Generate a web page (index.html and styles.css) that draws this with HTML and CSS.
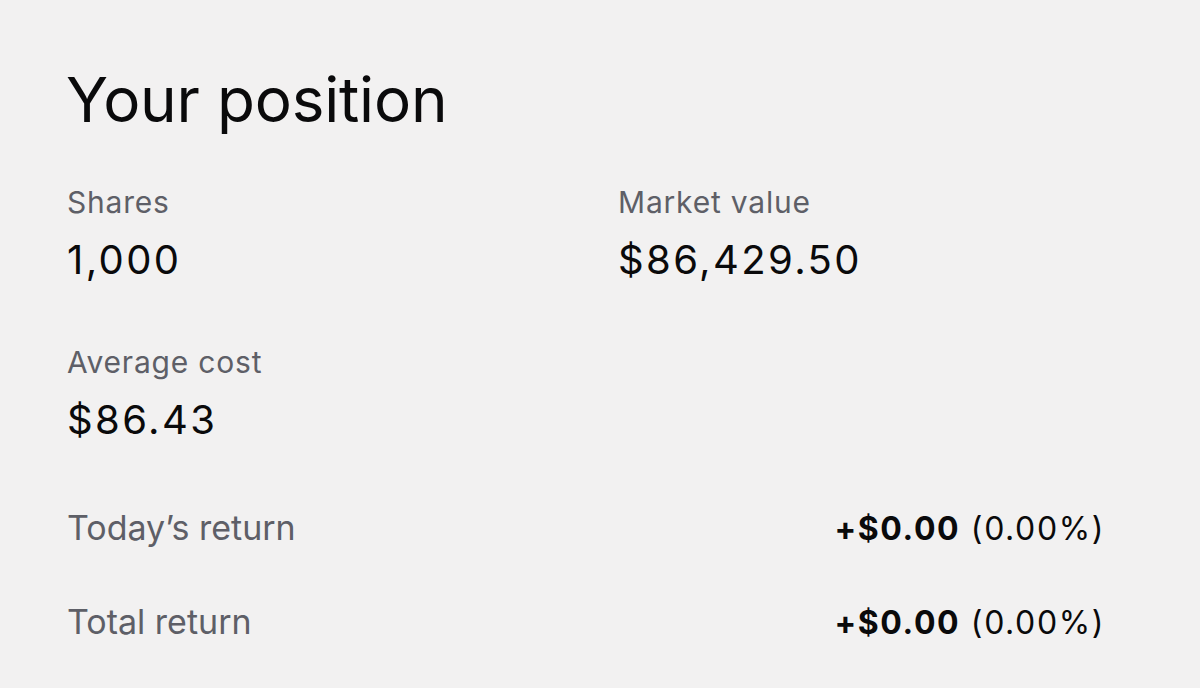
FILE: index.html
```html
<!DOCTYPE html>
<html lang="en">
<head>
<meta charset="utf-8">
<title>Your position</title>
<link rel="stylesheet" href="styles.css">
</head>
<body>
<main class="position">
  <h1 class="title">Your position</h1>
  <div class="stats">
    <div class="stat">
      <div class="label">Shares</div>
      <div class="value">1,000</div>
    </div>
    <div class="stat">
      <div class="label">Market value</div>
      <div class="value">$86,429.50</div>
    </div>
    <div class="stat">
      <div class="label">Average cost</div>
      <div class="value">$86.43</div>
    </div>
  </div>
  <div class="returns">
    <div class="row">
      <span class="row-label">Today’s return</span>
      <span class="row-value"><b>+$0.00</b> (0.00%)</span>
    </div>
    <div class="row">
      <span class="row-label">Total return</span>
      <span class="row-value"><b>+$0.00</b> (0.00%)</span>
    </div>
  </div>
</main>
</body>
</html>
```

FILE: styles.css
```css
html, body {
  margin: 0;
  padding: 0;
  background: #f2f1f1;
}
body {
  font-family: Inter, "Noto Sans", sans-serif;
  color: #0a0a0b;
}
.position {
  width: 1039px;
  padding: 62px 0 0 66px;
}
.title {
  margin: 0;
  font-size: 62px;
  font-weight: 400;
  line-height: 76px;
  letter-spacing: -0.2px;
}
.stats {
  display: grid;
  grid-template-columns: 551px 1fr;
  row-gap: 61px;
  margin-top: 46px;
}
.label {
  font-size: 30px;
  line-height: 36px;
  letter-spacing: 0.8px;
  color: #5e5f67;
  padding-left: 1px;
}
.value {
  margin-top: 17px;
  font-size: 40px;
  line-height: 46px;
  letter-spacing: 2.4px;
  padding-left: 1px;
}
.returns {
  display: flex;
  flex-direction: column;
  gap: 49px;
  margin-top: 63px;
}
.row {
  display: flex;
  justify-content: space-between;
  align-items: baseline;
  line-height: 44px;
  padding-left: 1px;
}
.row-label {
  font-size: 34px;
  color: #5e5f67;
}
.row-value {
  font-size: 32px;
  letter-spacing: 1.6px;
}
.row-value b {
  font-weight: 700;
}
```
